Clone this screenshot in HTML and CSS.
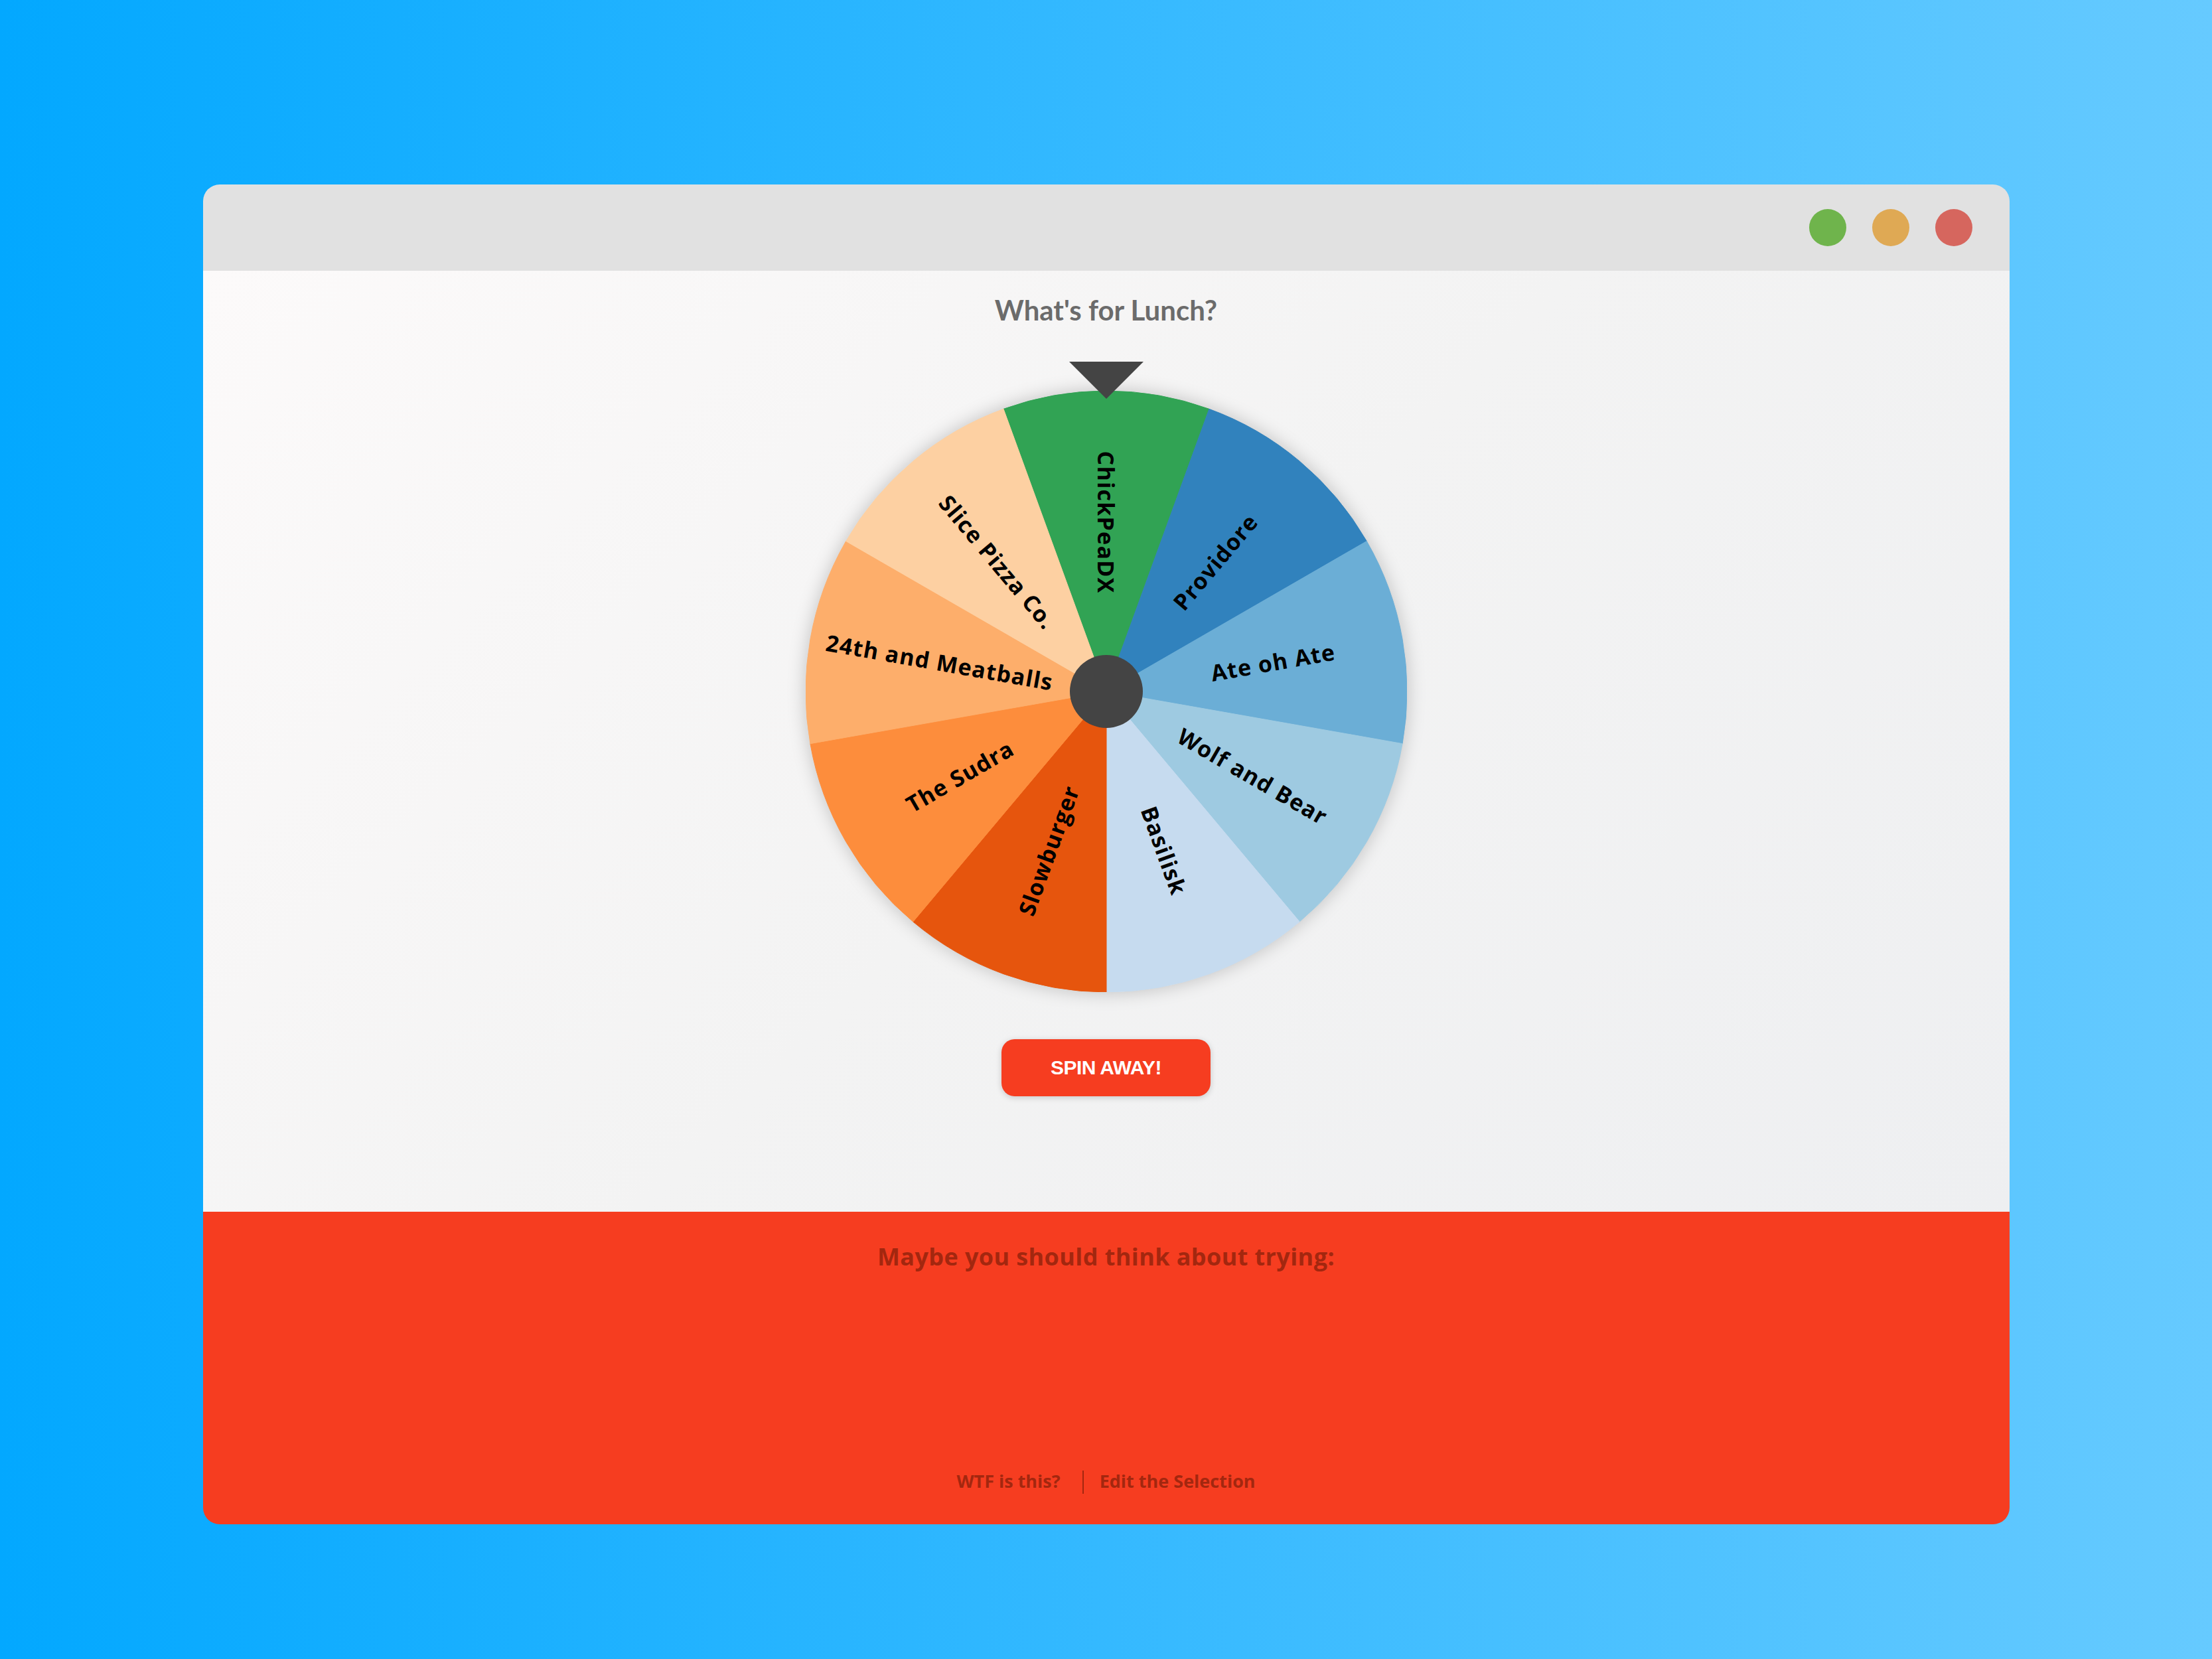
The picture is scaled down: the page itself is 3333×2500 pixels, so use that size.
FILE: index.html
```html
<!DOCTYPE html>
<html lang="en">
<head>
<meta charset="utf-8">
<title>What's for Lunch?</title>
<link rel="stylesheet" href="styles.css">
</head>
<body class="page">
  <div class="window">
    <header class="titlebar">
      <span class="dot dot-green"></span>
      <span class="dot dot-orange"></span>
      <span class="dot dot-red"></span>
    </header>
    <main class="content">
      <h1 class="title">What's for Lunch?</h1>
      <div class="wheel-wrap">
        <svg class="pointer" viewBox="0 0 112 56" width="112" height="56"><polygon points="0,0 112,0 56,56" fill="#444444"/></svg>
        <div class="wheel">
          <svg class="wheel-svg" viewBox="-453 -453 906 906" width="906" height="906">
            <g class="slices">
              <path d="M0 0 L-154.93 -425.68 A453 453 0 0 1 154.93 -425.68 Z" fill="#31a354" stroke="#31a354"/>
              <path d="M0 0 L154.93 -425.68 A453 453 0 0 1 392.31 -226.5 Z" fill="#3182bd" stroke="#3182bd"/>
              <path d="M0 0 L392.31 -226.5 A453 453 0 0 1 446.12 78.66 Z" fill="#6baed6" stroke="#6baed6"/>
              <path d="M0 0 L446.12 78.66 A453 453 0 0 1 291.18 347.02 Z" fill="#9ecae1" stroke="#9ecae1"/>
              <path d="M0 0 L291.18 347.02 A453 453 0 0 1 0 453 Z" fill="#c6dbef" stroke="#c6dbef"/>
              <path d="M0 0 L0 453 A453 453 0 0 1 -291.18 347.02 Z" fill="#e6550d" stroke="#e6550d"/>
              <path d="M0 0 L-291.18 347.02 A453 453 0 0 1 -446.12 78.66 Z" fill="#fd8d3c" stroke="#fd8d3c"/>
              <path d="M0 0 L-446.12 78.66 A453 453 0 0 1 -392.31 -226.5 Z" fill="#fdae6b" stroke="#fdae6b"/>
              <path d="M0 0 L-392.31 -226.5 A453 453 0 0 1 -154.93 -425.68 Z" fill="#fdd0a2" stroke="#fdd0a2"/>
            </g>
            <g class="labels">
              <text transform="rotate(0) translate(0 -255) rotate(90)">ChickPeaDX</text>
              <text transform="rotate(40) translate(0 -255) rotate(-90)">Providore</text>
              <text transform="rotate(80) translate(0 -255) rotate(-90)">Ate oh Ate</text>
              <text transform="rotate(120) translate(0 -255) rotate(-90)">Wolf and Bear</text>
              <text transform="rotate(160) translate(0 -255) rotate(-90)">Basilisk</text>
              <text transform="rotate(200) translate(0 -255) rotate(90)">Slowburger</text>
              <text transform="rotate(240) translate(0 -255) rotate(90)">The Sudra</text>
              <text transform="rotate(280) translate(0 -255) rotate(90)">24th and Meatballs</text>
              <text transform="rotate(320) translate(0 -255) rotate(90)">Slice Pizza Co.</text>
            </g>
            <circle class="hub" cx="0" cy="0" r="55"/>
          </svg>
        </div>
      </div>
      <button class="spin" type="button">SPIN AWAY!</button>
    </main>
    <section class="result">
      <p class="result-label">Maybe you should think about trying:</p>
      <nav class="links">
        <a class="link" href="#">WTF is this?</a>
        <span class="sep"></span>
        <a class="link" href="#">Edit the Selection</a>
      </nav>
    </section>
  </div>
</body>
</html>
```

FILE: styles.css
```css
* {
  box-sizing: border-box;
}

html, body {
  margin: 0;
  padding: 0;
}

.page {
  width: 3333px;
  height: 2500px;
  background: linear-gradient(to right, #03a8ff 0%, #66caff 100%);
  padding-top: 278px;
  display: flex;
  flex-direction: column;
  align-items: center;
  font-family: "Open Sans", "Liberation Sans", sans-serif;
}

.window {
  width: 2722px;
  height: 2019px;
  border-radius: 25px;
  overflow: hidden;
  display: flex;
  flex-direction: column;
}

.titlebar {
  height: 130px;
  flex: 0 0 130px;
  background: #e1e1e1;
  display: flex;
  align-items: center;
  justify-content: flex-end;
  gap: 39px;
  padding-right: 56px;
}

.dot {
  width: 56px;
  height: 56px;
  border-radius: 50%;
  display: block;
}

.dot-green { background: #6fb44c; }
.dot-orange { background: #dfa954; }
.dot-red { background: #d6665e; }

.content {
  height: 1418px;
  flex: 0 0 1418px;
  background: linear-gradient(135deg, #fcfafa 0%, #f3f3f3 50%, #eeeff1 100%);
  display: flex;
  flex-direction: column;
  align-items: center;
}

.title {
  margin: 38px 0 0;
  font-family: "Lato", "Open Sans", sans-serif;
  font-weight: 700;
  font-size: 42px;
  line-height: 42px;
  color: #6b6b6b;
}

.wheel-wrap {
  position: relative;
  margin-top: 101px;
  width: 906px;
  height: 906px;
}

.pointer {
  position: absolute;
  top: -44px;
  left: 397px;
  z-index: 2;
  display: block;
}

.wheel {
  width: 906px;
  height: 906px;
  border-radius: 50%;
  box-shadow: 0 0 28px rgba(0, 0, 0, 0.22);
}

.wheel-svg {
  display: block;
}

.labels text {
  font-family: "Open Sans", sans-serif;
  font-weight: 700;
  font-size: 34px;
  letter-spacing: 1.2px;
  fill: #000000;
  text-anchor: middle;
  dominant-baseline: central;
}

.hub {
  fill: #444444;
}

.spin {
  margin-top: 71px;
  width: 315px;
  height: 86px;
  border: none;
  border-radius: 20px;
  background: #f63d20;
  color: #ffffff;
  font-family: "Liberation Sans", Arial, sans-serif;
  font-weight: 700;
  font-size: 30px;
  letter-spacing: -0.6px;
  box-shadow: 0 2px 10px rgba(0, 0, 0, 0.18);
  display: flex;
  align-items: center;
  justify-content: center;
  padding: 0;
}

.result {
  height: 471px;
  flex: 0 0 471px;
  background: #f63d20;
  display: flex;
  flex-direction: column;
  align-items: center;
  justify-content: space-between;
  padding: 46px 0 48px;
}

.result-label {
  margin: 0;
  font-weight: 700;
  font-size: 36px;
  line-height: 43px;
  letter-spacing: 0.4px;
  color: #a3270f;
}

.links {
  display: flex;
  align-items: center;
  height: 34px;
}

.link {
  font-weight: 700;
  font-size: 27px;
  line-height: 34px;
  color: #a3270f;
  text-decoration: none;
}

.sep {
  width: 2px;
  height: 35px;
  background: #a3270f;
  margin: 3px 24px 0 33px;
  display: block;
}
```
